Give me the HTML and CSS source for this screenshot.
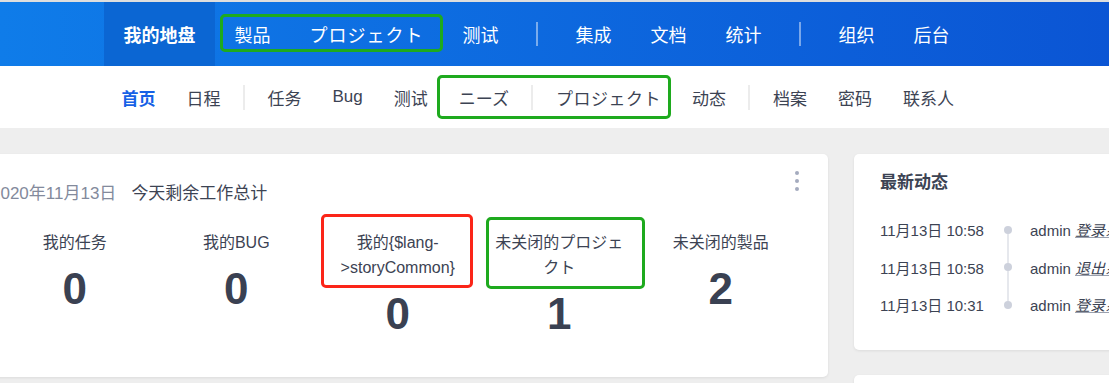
FILE: index.html
```html
<!DOCTYPE html>
<html lang="zh">

<head>
    <meta charset="UTF-8">
    <title>我的地盘</title>
    <link rel="stylesheet" href="styles.css">
</head>

<body>

    <!-- Main navigation -->
    <header class="header">
        <nav class="mainnav">
            <a class="active">我的地盘</a>
            <span class="mark mark-main"><a>製品</a><a class="kana">プロジェクト</a></span>
            <a>测试</a>
            <span class="divider"></span>
            <a>集成</a>
            <a>文档</a>
            <a>统计</a>
            <span class="divider"></span>
            <a>组织</a>
            <a>后台</a>
        </nav>
    </header>

    <!-- Sub navigation -->
    <nav class="subnav">
        <a class="active">首页</a>
        <a>日程</a>
        <span class="divider"></span>
        <a>任务</a>
        <a>Bug</a>
        <a>测试</a>
        <span class="mark mark-sub"><a>ニーズ</a><span class="divider"></span><a class="kana">プロジェクト</a></span>
        <a>动态</a>
        <span class="divider"></span>
        <a>档案</a>
        <a>密码</a>
        <a>联系人</a>
    </nav>

    <main class="content">
        <section class="card summary">
            <div class="more"><i></i><i></i><i></i></div>
            <div class="summary-title">
                <span class="date">2020年11月13日</span>
                <span>今天剩余工作总计</span>
            </div>
            <div class="stats">
                <div class="stat">
                    <div class="label">我的任务</div>
                    <div class="value">0</div>
                </div>
                <div class="stat">
                    <div class="label">我的BUG</div>
                    <div class="value">0</div>
                </div>
                <div class="stat">
                    <div class="label mark-red">我的{$lang->storyCommon}</div>
                    <div class="value">0</div>
                </div>
                <div class="stat">
                    <div class="label mark-green">未关闭的プロジェクト</div>
                    <div class="value">1</div>
                </div>
                <div class="stat">
                    <div class="label">未关闭的製品</div>
                    <div class="value">2</div>
                </div>
            </div>
        </section>

        <div class="side">
            <section class="card activity">
                <h3>最新动态</h3>
                <ul class="timeline">
                    <li><span class="time">11月13日 10:58</span><span class="dot"></span><span class="who">admin <em>登录系统</em></span></li>
                    <li><span class="time">11月13日 10:58</span><span class="dot"></span><span class="who">admin <em>退出系统</em></span></li>
                    <li><span class="time">11月13日 10:31</span><span class="dot"></span><span class="who">admin <em>登录系统</em></span></li>
                </ul>
            </section>
            <section class="card next"></section>
        </div>
    </main>

</body>

</html>
```

FILE: styles.css
```css
body {
    margin: 0;
    background-color: #eeeeee;
    font-family: "Liberation Sans", "Noto Sans CJK SC", sans-serif;
    color: #3c4353;
    overflow: hidden;
}

a {
    cursor: pointer;
}

/* header */
.header {
    border-top: 2px solid #dedede;
    background: linear-gradient(to right, #0f7ce9, #0b55d4);
    height: 64px;
}

.mainnav {
    display: flex;
    align-items: center;
    height: 100%;
    padding-left: 104px;
}

.mainnav a {
    display: flex;
    align-items: center;
    height: 64px;
    padding: 0 19.5px;
    color: #fff;
    font-size: 18px;
}

.mainnav a.kana {
    letter-spacing: 1px;
}

.mainnav a.active {
    background-color: #0b66d3;
    font-weight: bold;
}

.mainnav .divider {
    width: 2px;
    height: 24px;
    margin: 0 18px;
    background-color: rgba(255, 255, 255, 0.45);
}

/* annotation frames */
.mark {
    position: relative;
    display: flex;
    align-items: center;
}

.mark::after,
.mark-red::after,
.mark-green::after {
    content: "";
    position: absolute;
    border: 3px solid #1eaa1e;
    border-radius: 5px;
    pointer-events: none;
}

.mark-main::after {
    top: 12px;
    bottom: 14px;
    left: 5px;
    right: 0;
}

.mark-sub::after {
    top: 9px;
    bottom: 9px;
    left: -6px;
    right: 5px;
}

/* sub navigation */
.subnav {
    display: flex;
    align-items: center;
    height: 62px;
    padding-left: 106px;
    background-color: #fff;
}

.subnav a {
    display: flex;
    align-items: center;
    height: 62px;
    padding: 0 15.5px;
    font-size: 17px;
    color: #3c4353;
}

.subnav a.kana {
    letter-spacing: 0.5px;
}

.subnav a.active {
    color: #1661e6;
    font-weight: bold;
}

.subnav .divider {
    width: 2px;
    height: 25px;
    margin: 0 7px;
    background-color: #ececec;
}

/* content */
.content {
    display: flex;
    gap: 26px;
    margin: 26px 0 0 -32px;
}

.card {
    position: relative;
    background-color: #fff;
    border-radius: 5px;
    box-shadow: 0 1px 3px rgba(0, 0, 0, 0.08);
}

.summary {
    width: 808px;
    height: 193px;
    flex-shrink: 0;
    padding: 30px 26px 0;
}

.more {
    position: absolute;
    top: 17px;
    right: 29px;
    display: flex;
    flex-direction: column;
    gap: 4px;
}

.more i {
    width: 4px;
    height: 4px;
    border-radius: 50%;
    background-color: #a4abbe;
}

.summary-title {
    display: flex;
    gap: 15px;
    margin-left: -3px;
    font-size: 17px;
    line-height: 20px;
}

.summary-title .date {
    color: #838a9c;
}

.stats {
    display: flex;
    align-items: flex-start;
    margin-top: 26px;
}

.stat {
    width: 161.5px;
    padding: 0 10px;
    box-sizing: border-box;
    text-align: center;
}

.stat .label {
    position: relative;
    font-size: 16px;
    line-height: 25px;
}

.stat .value {
    margin-top: 12px;
    font-size: 44px;
    line-height: 44px;
    font-weight: bold;
    color: #3a4152;
}

.mark-red::after {
    border-color: #fb2518;
    top: -16px;
    bottom: -8px;
    left: -6px;
    right: -4px;
}

.mark-green::after {
    top: -13px;
    bottom: -9px;
    left: -3px;
    right: -15px;
}

/* side column */
.side {
    display: flex;
    flex-direction: column;
    gap: 25px;
}

.activity {
    width: 300px;
    height: 196px;
    padding: 17px 0 0 26px;
    box-sizing: border-box;
}

.activity h3 {
    margin: 0;
    font-size: 17px;
    line-height: 24px;
}

.timeline {
    list-style: none;
    margin: 16px 0 0;
    padding: 0;
}

.timeline li {
    display: flex;
    align-items: center;
    height: 37.5px;
    font-size: 15px;
}

.timeline .time {
    width: 124px;
    white-space: nowrap;
}

.timeline .dot {
    position: relative;
    width: 8px;
    height: 8px;
    border-radius: 50%;
    background-color: #cdd1dc;
    margin-right: 18px;
}

.timeline li:not(:last-child) .dot::after {
    content: "";
    position: absolute;
    left: 3px;
    top: 8px;
    width: 2px;
    height: 30px;
    background-color: #e6e8ed;
}

.timeline .who {
    white-space: nowrap;
}

.timeline em {
    text-decoration: underline;
    text-decoration-color: #9aa0ae;
}

.next {
    height: 200px;
}
```
